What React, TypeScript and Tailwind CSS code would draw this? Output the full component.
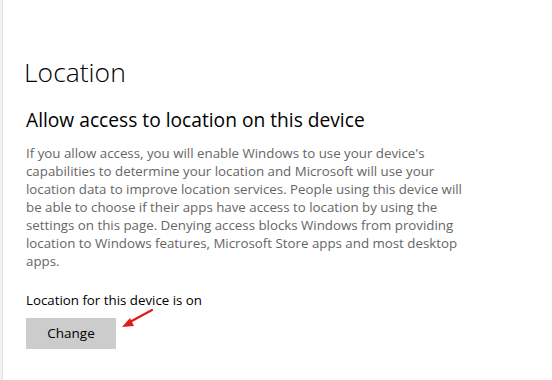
const font = "font-['Segoe_UI','Open_Sans','Noto_Sans',sans-serif]";

const body =
  "If you allow access, you will enable Windows to use your device's capabilities to determine your location and Microsoft will use your location data to improve location services. People using this device will be able to choose if their apps have access to location by using the settings on this page. Denying access blocks Windows from providing location to Windows features, Microsoft Store apps and most desktop apps.";

const lines = [
  "If you allow access, you will enable Windows to use your device's",
  "capabilities to determine your location and Microsoft will use your",
  "location data to improve location services. People using this device will",
  "be able to choose if their apps have access to location by using the",
  "settings on this page. Denying access blocks Windows from providing",
  "location to Windows features, Microsoft Store apps and most desktop",
  "apps.",
];

export default function App() {
  return (
    <div className={`flex h-[380px] w-[552px] bg-white ${font}`}>
      <div className="w-[3px] shrink-0 border-r border-[#e2e2e2] bg-[#f2f2f2]" />
      <main className="flex flex-col pl-[23px] pt-[54px]">
        <h1 className="-ml-[2px] text-[26.5px] font-light leading-[36px] text-black">Location</h1>
        <h2 className="mt-[17px] text-[19.2px] leading-[26px] text-black">
          Allow access to location on this device
        </h2>
        <p className="mt-[11px] text-[13.3px] leading-[18px] text-[#666]" aria-label={body}>
          {lines.map((l) => (
            <span key={l} className="block whitespace-nowrap">
              {l}
            </span>
          ))}
        </p>
        <p className="mt-[21px] text-[13.3px] leading-[18px] text-black">
          Location for this device is on
        </p>
        <div className="relative mt-[9px]">
          <button
            type="button"
            className="h-[31px] w-[90px] bg-[#cccccc] text-[13.5px] text-black"
          >
            Change
          </button>
          <svg
            className="absolute left-[92px] top-[-10px]"
            width="40"
            height="24"
            viewBox="0 0 40 24"
          >
            <line x1="34" y1="2" x2="10" y2="15" stroke="#e01b1b" strokeWidth="2.2" strokeLinecap="round" />
            <polygon points="4,19 12,10 16,18" fill="#e01b1b" />
          </svg>
        </div>
      </main>
    </div>
  );
}
